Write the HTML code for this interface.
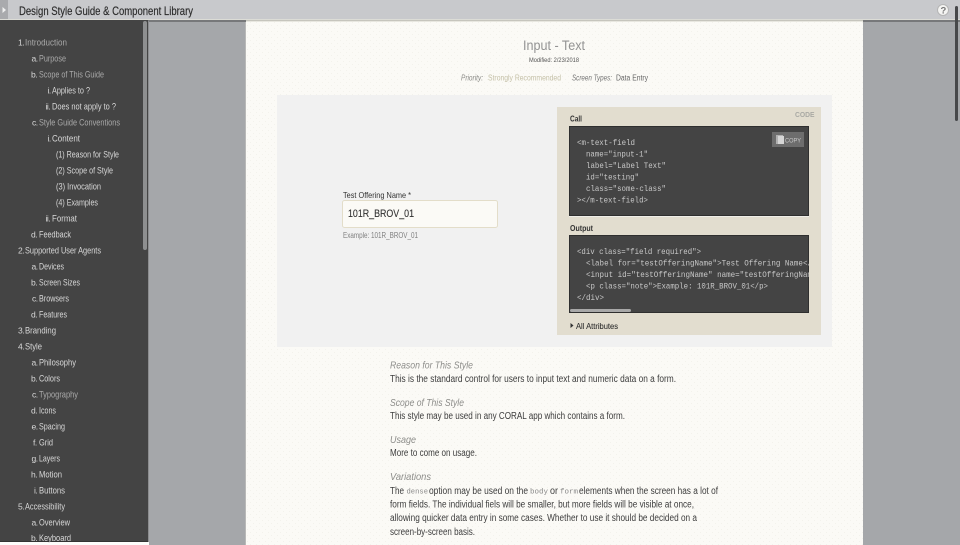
<!DOCTYPE html>
<html><head><meta charset="utf-8"><title>Input - Text</title>
<style>
html,body{margin:0;padding:0;width:960px;height:545px;overflow:hidden;background:#a5a7aa}
svg{display:block;position:absolute;left:0;top:0}
text{font-family:"Liberation Sans",sans-serif;white-space:pre}
.n{font-size:9.5px;fill:#d8d8d8}
.k{font-size:8.5px;fill:#d8d8d8;letter-spacing:-.5px}
.d{font-size:9.5px;fill:#a9a9a9}
.m{font-family:"Liberation Mono",monospace;font-size:8.5px;fill:#c8c8c8}
.i{font-family:"Liberation Mono",monospace;font-size:7.5px;fill:#888}
.b{font-size:10px;fill:#3c3c3c}
.h{font-size:10.5px;font-style:italic;fill:#8d8d8a}
</style></head><body>
<svg width="960" height="545" viewBox="0 0 960 545" xmlns="http://www.w3.org/2000/svg">
<defs>
<pattern id="dots" width="6" height="6" patternUnits="userSpaceOnUse"><rect width="6" height="6" fill="#fbfaf6"/><rect x="1" y="1" width="1" height="1" fill="#f3f2ec"/><rect x="4" y="4" width="1" height="1" fill="#f3f2ec"/></pattern>
</defs>
<rect width="960" height="545" fill="#a5a7aa"/>
<rect x="246" y="21" width="617" height="524" fill="url(#dots)"/>
<rect x="245" y="21" width="1" height="524" fill="#b9b9b8"/>
<!-- top bar -->
<rect width="960" height="19" fill="#c8c9cc"/>
<rect width="8" height="19" fill="#a9aaad"/>
<path d="M2.5 7l3.5 3-3.5 3z" fill="#f0f0f0"/>
<rect y="19" width="960" height="1" fill="#dcdcd6"/>
<rect y="20" width="960" height="2" fill="#77787a"/>
<rect x="246" y="20" width="617" height="1" fill="#c6c5bd"/>
<rect x="246" y="21" width="617" height="1" fill="#e8e7e0"/>
<text x="19" y="15" font-size="12" fill="#2a2a2a" textLength="174" lengthAdjust="spacingAndGlyphs" stroke="#2a2a2a" stroke-width=".15">Design Style Guide &amp; Component Library</text>
<circle cx="943" cy="10" r="5.5" fill="#f4f4f2" stroke="#b5b5b5"/>
<text x="940.5" y="13.5" font-size="9.5" font-weight="bold" fill="#777">?</text>
<rect x="955" y="6" width="3" height="115" rx="1.5" fill="#47484a"/>
<!-- sidebar -->
<rect y="20" width="148" height="522" fill="#444"/>
<rect x="148" y="21" width="1" height="524" fill="#8c8d8f"/>
<rect y="542" width="149" height="3" fill="#fdfdfb"/>
<rect y="541" width="148" height="1" fill="#333"/>
<rect x="143" y="21" width="4" height="229" rx="2" fill="#8e8f90"/>
<g class="nav">
<text class="k" x="18" y="45.5">1.</text><text class="d" x="25" y="45.5" textLength="42" lengthAdjust="spacingAndGlyphs">Introduction</text>
<text class="k" x="31.5" y="61.5">a.</text><text class="d" x="39" y="61.5" textLength="27" lengthAdjust="spacingAndGlyphs">Purpose</text>
<text class="k" x="31" y="77.5">b.</text><text class="d" x="39" y="77.5" textLength="65" lengthAdjust="spacingAndGlyphs">Scope of This Guide</text>
<text class="k" x="47.5" y="93.5">i.</text><text class="n" x="52" y="93.5" textLength="38" lengthAdjust="spacingAndGlyphs">Applies to ?</text>
<text class="k" x="45.5" y="109.5">ii.</text><text class="n" x="52" y="109.5" textLength="64" lengthAdjust="spacingAndGlyphs">Does not apply to ?</text>
<text class="k" x="32" y="125.5">c.</text><text class="d" x="39" y="125.5" textLength="81" lengthAdjust="spacingAndGlyphs">Style Guide Conventions</text>
<text class="k" x="47.5" y="141.5">i.</text><text class="n" x="52" y="141.5" textLength="28" lengthAdjust="spacingAndGlyphs">Content</text>
<text class="n" x="56" y="157.5" textLength="63" lengthAdjust="spacingAndGlyphs">(1) Reason for Style</text>
<text class="n" x="56" y="173.5" textLength="57" lengthAdjust="spacingAndGlyphs">(2) Scope of Style</text>
<text class="n" x="56" y="189.5" textLength="45" lengthAdjust="spacingAndGlyphs">(3) Invocation</text>
<text class="n" x="56" y="205.5" textLength="42" lengthAdjust="spacingAndGlyphs">(4) Examples</text>
<text class="k" x="45.5" y="221.5">ii.</text><text class="n" x="52" y="221.5" textLength="25" lengthAdjust="spacingAndGlyphs">Format</text>
<text class="k" x="31" y="237.5">d.</text><text class="n" x="39" y="237.5" textLength="32" lengthAdjust="spacingAndGlyphs">Feedback</text>
<text class="k" x="18" y="253.5">2.</text><text class="n" x="25" y="253.5" textLength="76" lengthAdjust="spacingAndGlyphs">Supported User Agents</text>
<text class="k" x="31.5" y="269.5">a.</text><text class="n" x="39" y="269.5" textLength="25" lengthAdjust="spacingAndGlyphs">Devices</text>
<text class="k" x="31" y="285.5">b.</text><text class="n" x="39" y="285.5" textLength="41" lengthAdjust="spacingAndGlyphs">Screen Sizes</text>
<text class="k" x="32" y="301.5">c.</text><text class="n" x="39" y="301.5" textLength="30" lengthAdjust="spacingAndGlyphs">Browsers</text>
<text class="k" x="31" y="317.5">d.</text><text class="n" x="39" y="317.5" textLength="28" lengthAdjust="spacingAndGlyphs">Features</text>
<text class="k" x="18" y="333.5">3.</text><text class="n" x="25" y="333.5" textLength="31" lengthAdjust="spacingAndGlyphs">Branding</text>
<text class="k" x="18" y="349.5">4.</text><text class="n" x="25" y="349.5" textLength="17" lengthAdjust="spacingAndGlyphs">Style</text>
<text class="k" x="31.5" y="365.5">a.</text><text class="n" x="39" y="365.5" textLength="37" lengthAdjust="spacingAndGlyphs">Philosophy</text>
<text class="k" x="31" y="381.5">b.</text><text class="n" x="39" y="381.5" textLength="21" lengthAdjust="spacingAndGlyphs">Colors</text>
<text class="k" x="32" y="397.5">c.</text><text class="d" x="39" y="397.5" textLength="39" lengthAdjust="spacingAndGlyphs">Typography</text>
<text class="k" x="31" y="413.5">d.</text><text class="n" x="39" y="413.5" textLength="17" lengthAdjust="spacingAndGlyphs">Icons</text>
<text class="k" x="31.5" y="429.5">e.</text><text class="n" x="39" y="429.5" textLength="26" lengthAdjust="spacingAndGlyphs">Spacing</text>
<text class="k" x="33" y="445.5">f.</text><text class="n" x="39" y="445.5" textLength="14" lengthAdjust="spacingAndGlyphs">Grid</text>
<text class="k" x="31.5" y="461.5">g.</text><text class="n" x="39" y="461.5" textLength="21" lengthAdjust="spacingAndGlyphs">Layers</text>
<text class="k" x="31" y="477.5">h.</text><text class="n" x="39" y="477.5" textLength="23" lengthAdjust="spacingAndGlyphs">Motion</text>
<text class="k" x="34" y="493.5">i.</text><text class="n" x="39" y="493.5" textLength="26" lengthAdjust="spacingAndGlyphs">Buttons</text>
<text class="k" x="18" y="509.5">5.</text><text class="n" x="25" y="509.5" textLength="40" lengthAdjust="spacingAndGlyphs">Accessibility</text>
<text class="k" x="31.5" y="525.5">a.</text><text class="n" x="39" y="525.5" textLength="31" lengthAdjust="spacingAndGlyphs">Overview</text>
<text class="k" x="31" y="541">b.</text><text class="n" x="39" y="541" textLength="32" lengthAdjust="spacingAndGlyphs">Keyboard</text>
</g>
<!-- header -->
<text x="523" y="50" font-size="13.5" fill="#939393" textLength="62" lengthAdjust="spacingAndGlyphs">Input - Text</text>
<text x="529" y="62" font-size="6.5" fill="#555" textLength="50" lengthAdjust="spacingAndGlyphs">Modified: 2/23/2018</text>
<text x="461" y="80.5" font-size="8" font-style="italic" fill="#8a8a86" textLength="22" lengthAdjust="spacingAndGlyphs">Priority:</text>
<text x="488" y="80.5" font-size="8" fill="#c5c1a8" textLength="73" lengthAdjust="spacingAndGlyphs">Strongly Recommended</text>
<text x="572" y="80.5" font-size="8" font-style="italic" fill="#777" textLength="40" lengthAdjust="spacingAndGlyphs">Screen Types:</text>
<text x="616" y="80.5" font-size="8" fill="#666" textLength="32" lengthAdjust="spacingAndGlyphs">Data Entry</text>
<!-- demo -->
<rect x="277" y="95" width="555" height="252" fill="#f1f1f1"/>
<text x="343" y="198" font-size="8.5" fill="#333" textLength="68" lengthAdjust="spacingAndGlyphs">Test Offering Name *</text>
<rect x="342.500" y="200.500" width="155" height="27" rx="2" fill="#fbfaf6" stroke="#e3ddc9"/>
<text x="348" y="217" font-size="11" fill="#333" stroke="#333" stroke-width=".12" textLength="66" lengthAdjust="spacingAndGlyphs">101R_BROV_01</text>
<text x="343" y="238" font-size="8" fill="#808080" textLength="75" lengthAdjust="spacingAndGlyphs">Example: 101R_BROV_01</text>
<!-- code panel -->
<rect x="557" y="107" width="264" height="228" fill="#e2ddcf"/>
<text x="795" y="117" font-size="7.5" font-weight="bold" fill="#a9a9a4" textLength="19.5" lengthAdjust="spacingAndGlyphs">CODE</text>
<text x="570" y="121.500" font-size="8" font-weight="bold" fill="#333" textLength="12" lengthAdjust="spacingAndGlyphs">Call</text>
<rect x="569.500" y="126.500" width="239" height="89" fill="#444" stroke="#2f2f2f"/>
<rect x="569" y="216" width="240" height="1" fill="#efeee8"/>
<rect x="772" y="132" width="32" height="15" fill="#6d6d6d"/>
<rect x="776" y="135" width="7" height="9" fill="#b0b0b0"/>
<rect x="778" y="136" width="6" height="8" fill="#d6d6d6"/>
<text x="785" y="142.500" font-size="6.500" fill="#c8c8c8" textLength="16" lengthAdjust="spacingAndGlyphs">COPY</text>
<text class="m" x="577" y="145" textLength="58" lengthAdjust="spacingAndGlyphs">&lt;m-text-field</text>
<text class="m" x="586" y="156.500" textLength="62" lengthAdjust="spacingAndGlyphs">name="input-1"</text>
<text class="m" x="586" y="168" textLength="80" lengthAdjust="spacingAndGlyphs">label="Label Text"</text>
<text class="m" x="586" y="179.500" textLength="53" lengthAdjust="spacingAndGlyphs">id="testing"</text>
<text class="m" x="586" y="191" textLength="80" lengthAdjust="spacingAndGlyphs">class="some-class"</text>
<text class="m" x="577" y="202.500" textLength="71" lengthAdjust="spacingAndGlyphs">&gt;&lt;/m-text-field&gt;</text>
<text x="570" y="231" font-size="8" font-weight="bold" fill="#333" textLength="23" lengthAdjust="spacingAndGlyphs">Output</text>
<svg x="569" y="235" width="240" height="78" viewBox="0 0 240 78">
<rect x=".5" y=".5" width="239" height="77" fill="#444" stroke="#2f2f2f"/>
<text class="m" x="8" y="19" textLength="124" lengthAdjust="spacingAndGlyphs">&lt;div class="field required"&gt;</text>
<text class="m" x="17" y="30.500" textLength="226" lengthAdjust="spacingAndGlyphs">&lt;label for="testOfferingName"&gt;Test Offering Name&lt;/</text>
<text class="m" x="17" y="42" textLength="226" lengthAdjust="spacingAndGlyphs">&lt;input id="testOfferingName" name="testOfferingNam</text>
<text class="m" x="17" y="53.500" textLength="182" lengthAdjust="spacingAndGlyphs">&lt;p class="note"&gt;Example: 101R_BROV_01&lt;/p&gt;</text>
<text class="m" x="8" y="65" textLength="27" lengthAdjust="spacingAndGlyphs">&lt;/div&gt;</text>
<rect x="1" y="74" width="61" height="3" rx="1.5" fill="#a8a8a8"/>
</svg>
<path d="M570.500 323l3 2.500-3 2.500z" fill="#333"/>
<text x="576" y="329" font-size="8" fill="#333" stroke="#333" stroke-width=".1" textLength="42" lengthAdjust="spacingAndGlyphs">All Attributes</text>
<!-- body copy -->
<text class="h" x="390" y="368.500" textLength="83" lengthAdjust="spacingAndGlyphs">Reason for This Style</text>
<text class="b" x="390" y="382" textLength="286" lengthAdjust="spacingAndGlyphs">This is the standard control for users to input text and numeric data on a form.</text>
<text class="h" x="390" y="406" textLength="74" lengthAdjust="spacingAndGlyphs">Scope of This Style</text>
<text class="b" x="390" y="419" textLength="235" lengthAdjust="spacingAndGlyphs">This style may be used in any CORAL app which contains a form.</text>
<text class="h" x="390" y="443" textLength="26" lengthAdjust="spacingAndGlyphs">Usage</text>
<text class="b" x="390" y="456" textLength="87" lengthAdjust="spacingAndGlyphs">More to come on usage.</text>
<text class="h" x="390" y="480" textLength="41" lengthAdjust="spacingAndGlyphs">Variations</text>
<text class="b" x="390" y="494" textLength="14" lengthAdjust="spacingAndGlyphs">The</text>
<text class="i" x="406.500" y="493.500" textLength="21.500" lengthAdjust="spacingAndGlyphs">dense</text>
<text class="b" x="429" y="494" textLength="99" lengthAdjust="spacingAndGlyphs">option may be used on the</text>
<text class="i" x="530" y="493.500" textLength="18" lengthAdjust="spacingAndGlyphs">body</text>
<text class="b" x="550" y="494" textLength="8" lengthAdjust="spacingAndGlyphs">or</text>
<text class="i" x="560" y="493.500" textLength="18" lengthAdjust="spacingAndGlyphs">form</text>
<text class="b" x="579" y="494" textLength="139" lengthAdjust="spacingAndGlyphs">elements when the screen has a lot of</text>
<text class="b" x="390" y="507.500" textLength="304" lengthAdjust="spacingAndGlyphs">form fields. The individual fiels will be smaller, but more fields will be visible at once,</text>
<text class="b" x="390" y="521" textLength="307" lengthAdjust="spacingAndGlyphs">allowing quicker data entry in some cases. Whether to use it should be decided on a</text>
<text class="b" x="390" y="535" textLength="85" lengthAdjust="spacingAndGlyphs">screen-by-screen basis.</text>
</svg>
</body></html>
